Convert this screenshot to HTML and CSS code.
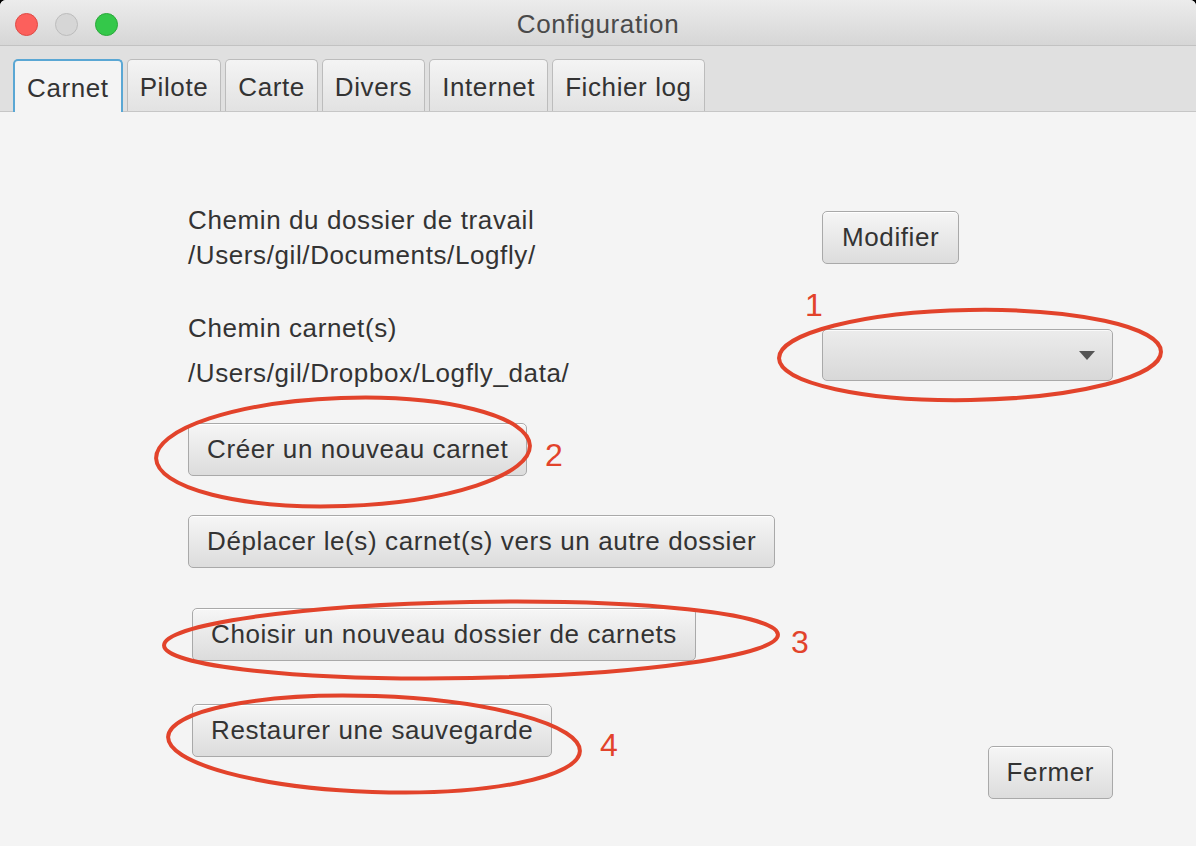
FILE: index.html
```html
<!DOCTYPE html>
<html>
  <head>
    <title>Configuration</title>
    <link rel="stylesheet" href="styles.css">
  </head>
  <body>
    <div class="window">
      <div class="titlebar">
        <div class="lights">
          <span class="light red"></span>
          <span class="light grey"></span>
          <span class="light green"></span>
        </div>
        <div class="title">Configuration</div>
      </div>

      <div class="tabbar">
        <div class="tab active">Carnet</div>
        <div class="tab">Pilote</div>
        <div class="tab">Carte</div>
        <div class="tab">Divers</div>
        <div class="tab">Internet</div>
        <div class="tab">Fichier log</div>
      </div>

      <div class="content">
        <div class="row row-work">
          <div class="left">
            <div class="label">Chemin du dossier de travail</div>
            <div class="label">/Users/gil/Documents/Logfly/</div>
          </div>
          <div class="right">
            <button class="btn btn-modify">Modifier</button>
          </div>
        </div>

        <div class="row row-books">
          <div class="left">
            <div class="label">Chemin carnet(s)</div>
            <div class="label path">/Users/gil/Dropbox/Logfly_data/</div>
          </div>
          <div class="right">
            <div class="combo">
              <span class="arrow"></span>
            </div>
          </div>
        </div>

        <div class="row row-create">
          <button class="btn">Créer un nouveau carnet</button>
        </div>
        <div class="row row-move">
          <button class="btn">Déplacer le(s) carnet(s) vers un autre dossier</button>
        </div>
        <div class="row row-choose">
          <button class="btn">Choisir un nouveau dossier de carnets</button>
        </div>
        <div class="row row-restore">
          <div class="left">
            <button class="btn">Restaurer une sauvegarde</button>
          </div>
          <div class="right">
            <button class="btn btn-close">Fermer</button>
          </div>
        </div>
      </div>

      <!-- annotations drawn over the screenshot -->
      <svg class="marks" width="1196" height="846" viewBox="0 0 1196 846">
        <ellipse cx="970" cy="355" rx="191" ry="45" transform="rotate(-1 970 355)" />
        <ellipse cx="343" cy="452" rx="187" ry="54" transform="rotate(-2 343 452)" />
        <ellipse cx="471" cy="640" rx="307" ry="38" transform="rotate(-1 471 640)" />
        <ellipse cx="374" cy="744" rx="206" ry="48" transform="rotate(2 374 744)" />
      </svg>
      <span class="num num1">1</span>
      <span class="num num2">2</span>
      <span class="num num3">3</span>
      <span class="num num4">4</span>
    </div>
  </body>
</html>
```

FILE: styles.css
```css
/* General */
body {
  margin: 0;
  background: #000;
  font-family: 'Liberation Sans', Arial, sans-serif;
  color: #333;
}

.window {
  position: relative;
  width: 1196px;
  height: 846px;
  background: #f4f4f4;
  border-radius: 6px 6px 0 0;
  overflow: hidden;
  letter-spacing: 0.6px;
}

/* Title bar */
.titlebar {
  position: relative;
  height: 45px;
  background: linear-gradient(#ececec, #d6d6d6);
  border-bottom: 1px solid #c2c2c2;
  display: flex;
  align-items: center;
  justify-content: center;
}

.lights {
  position: absolute;
  left: 15px;
  top: 13px;
  display: flex;
  gap: 17px;
}

.light {
  width: 23px;
  height: 23px;
  border-radius: 50%;
  box-sizing: border-box;
}

.light.red {
  background: #fc605c;
  border: 1px solid #de4a45;
}

.light.grey {
  background: #d6d6d6;
  border: 1px solid #bcbcbc;
}

.light.green {
  background: #34c84a;
  border: 1px solid #2aa83a;
}

.title {
  font-size: 26px;
  color: #4a4a4a;
  padding-top: 4px;
}

/* Tabs */
.tabbar {
  height: 65px;
  background: #e0e0e0;
  border-bottom: 1px solid #c6c6c6;
  display: flex;
  align-items: flex-end;
  gap: 4px;
  padding-left: 13px;
}

.tab {
  height: 52px;
  box-sizing: border-box;
  padding: 0 12px;
  font-size: 26px;
  line-height: 54px;
  color: #333;
  background: linear-gradient(#f4f4f4, #e2e2e2);
  border: 1px solid #bcbcbc;
  border-bottom: none;
  border-radius: 5px 5px 0 0;
}

.tab.active {
  background: #f4f4f4;
  border: 2px solid #5aa7d4;
  border-bottom: none;
  height: 53px;
  margin-bottom: -1px;
}

/* Content */
.content {
  padding-left: 188px;
}

.row {
  display: flex;
  align-items: flex-start;
}

.left {
  width: 634px;
}

.right {
  width: 291px;
  display: flex;
}

.label {
  font-size: 26px;
  line-height: 35px;
  color: #333;
}

.label.path {
  margin-top: 10px;
}

.btn {
  font-family: inherit;
  font-size: 26px;
  letter-spacing: 0.6px;
  color: #333;
  height: 53px;
  padding: 0 18px;
  background: linear-gradient(#f6f6f6, #dcdcdc);
  border: 1px solid #a9a9a9;
  border-radius: 5px;
  box-shadow: inset 0 1px 0 #ffffff;
}

.row-work {
  margin-top: 91px;
}

.btn-modify {
  margin-top: 8px;
  padding: 0 19px;
}

.row-books {
  margin-top: 38px;
}

.combo {
  margin-top: 18px;
  width: 291px;
  height: 52px;
  box-sizing: border-box;
  border: 1px solid #a9a9a9;
  border-radius: 5px;
  background: linear-gradient(#ececec, #d8d8d8);
  box-shadow: inset 0 1px 0 #fafafa;
  display: flex;
  align-items: center;
  justify-content: flex-end;
  padding-right: 17px;
}

.arrow {
  width: 0;
  height: 0;
  border-left: 8px solid transparent;
  border-right: 8px solid transparent;
  border-top: 9px solid #555;
}

.row-create {
  margin-top: 32px;
}

.row-move {
  margin-top: 39px;
}

.row-choose {
  margin-top: 40px;
  padding-left: 4px;
}

.row-restore {
  margin-top: 43px;
}

.row-restore .left {
  padding-left: 4px;
  width: 630px;
}

.btn-close {
  margin-top: 42px;
  margin-left: auto;
}

/* Red annotations */
.marks {
  position: absolute;
  left: 0;
  top: 0;
  pointer-events: none;
}

.marks ellipse {
  fill: none;
  stroke: #e2432b;
  stroke-width: 4;
}

.num {
  position: absolute;
  font-size: 32px;
  line-height: 32px;
  letter-spacing: 0;
  color: #e2432b;
}

.num1 { left: 805px; top: 289px; }
.num2 { left: 545px; top: 439px; }
.num3 { left: 791px; top: 626px; }
.num4 { left: 600px; top: 729px; }
```
